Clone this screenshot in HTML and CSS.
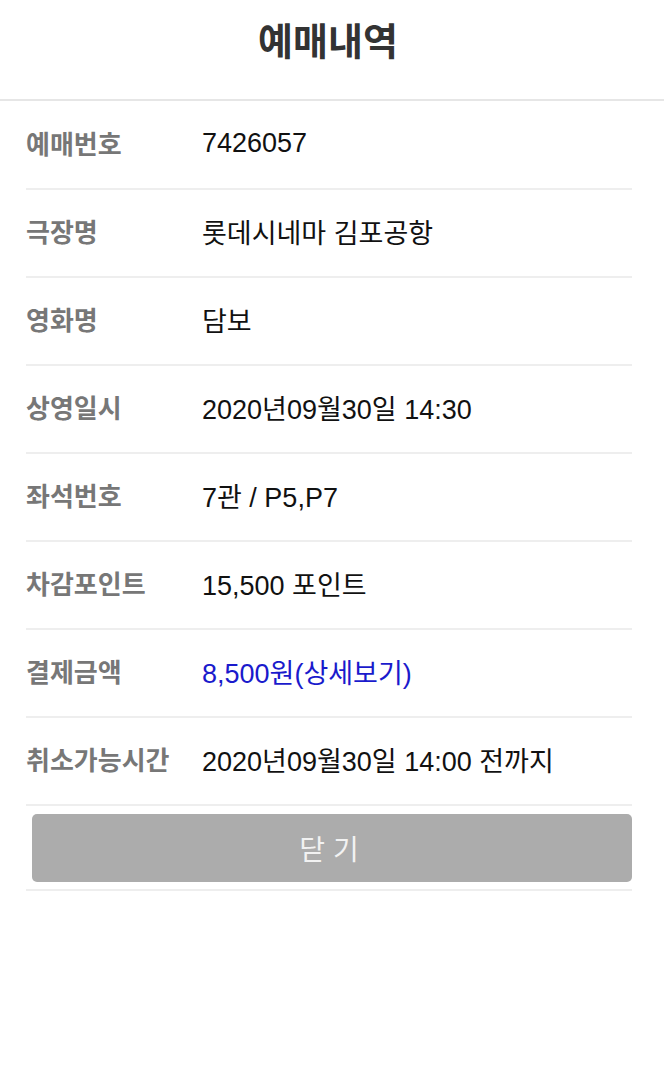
FILE: index.html
```html
<!DOCTYPE html>
<html lang="ko">
<head>
    <meta charset="UTF-8">
    <meta name="viewport" content="width=device-width, initial-scale=1.0">
    <title>예매내역</title>
    <link rel="stylesheet" href="styles.css">
</head>
<body>
    <header class="header">
        <h1>예매내역</h1>
    </header>
    <div class="list">
        <div class="row"><span class="label">예매번호</span><span class="value">7426057</span></div>
        <div class="row"><span class="label">극장명</span><span class="value">롯데시네마 김포공항</span></div>
        <div class="row"><span class="label">영화명</span><span class="value">담보</span></div>
        <div class="row"><span class="label">상영일시</span><span class="value">2020년09월30일 14:30</span></div>
        <div class="row"><span class="label">좌석번호</span><span class="value">7관 / P5,P7</span></div>
        <div class="row"><span class="label">차감포인트</span><span class="value">15,500 포인트</span></div>
        <div class="row"><span class="label">결제금액</span><span class="value link">8,500원(상세보기)</span></div>
        <div class="row"><span class="label">취소가능시간</span><span class="value">2020년09월30일 14:00 전까지</span></div>
        <div class="btn-row">
            <button type="button" class="close-btn">닫 기</button>
        </div>
    </div>
</body>
</html>
```

FILE: styles.css
```css
body {
    margin: 0;
    font-family: "Liberation Sans", "Noto Sans CJK KR", sans-serif;
    background: #fff;
    color: #111;
}
.header {
    height: 99px;
    border-bottom: 2px solid #e6e6e6;
    display: flex;
    align-items: center;
    justify-content: center;
}
.header h1 {
    margin: 0 8px 22px 0;
    font-size: 38px;
    font-weight: bold;
    color: #333;
}
.list {
    margin: 1px 32px 0 26px;
}
.row {
    height: 82px;
    padding-bottom: 4px;
    border-bottom: 2px solid #eeeeee;
    display: flex;
    align-items: center;
}
.label {
    width: 176px;
    padding-bottom: 2px;
    font-size: 26px;
    font-weight: bold;
    color: #777;
}
.value {
    font-size: 27px;
    color: #111;
}
.value.link {
    color: #1a1acc;
}
.btn-row {
    padding: 8px 0 7px 6px;
    border-bottom: 2px solid #eeeeee;
}
.close-btn {
    display: block;
    width: 100%;
    height: 68px;
    padding: 0 6px 0 0;
    border: none;
    border-radius: 5px;
    background: #acacac;
    color: #f2f2f2;
    font-family: "Liberation Sans", "Noto Sans CJK KR", sans-serif;
    font-size: 28px;
}
```
